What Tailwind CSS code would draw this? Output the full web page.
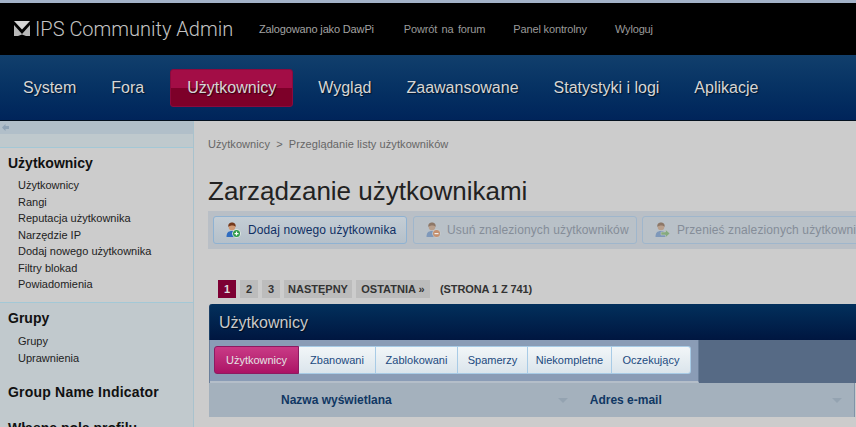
<!DOCTYPE html>
<html lang="pl">
<head>
<meta charset="utf-8">
<script src="https://cdn.jsdelivr.net/npm/@tailwindcss/browser@4"></script>
</head>
<body class="w-[856px] h-[427px] overflow-hidden bg-[#cccccc] font-['Liberation_Sans',Arial,sans-serif]">
<div class="h-[3px] bg-[#a3b2c8]"></div>
<header class="h-[52px] bg-black flex items-center">
  <svg class="ml-[14px] -mt-[1px] w-[16px] h-[15px]" viewBox="0 0 16 15"><path d="M0 0h16L8 8.500z" fill="#d4d4d4"/><path d="M0 4L8 13l8-9v11h-4L8 13.500 4 15H0z" fill="#b8b8b8"/></svg>
  <div class="ml-[5px] text-[20px] font-light text-[#c4c4c4] font-['Roboto',sans-serif] w-[199px] whitespace-nowrap">IPS Community Admin</div>
  <nav class="flex text-[11px] tracking-[-0.15px] text-[#9a9a9a] whitespace-nowrap ml-[25px]">
    <span class="text-[#a3a3a3]">Zalogowano jako DawPi</span>
    <span class="ml-[30px] [word-spacing:1.5px]">Powrót na forum</span>
    <span class="ml-[28px]">Panel kontrolny</span>
    <span class="ml-[28px]">Wyloguj</span>
  </nav>
</header>
<nav class="h-[66px] border-b border-[#04111f] bg-linear-to-b from-[#113f6c] to-[#00245a] flex items-center pl-[23px] text-[16px] text-[#d6d6d6] whitespace-nowrap [text-shadow:1px_1px_1px_rgba(0,0,0,0.6)]">
  <span>System</span>
  <span class="ml-[35px]">Fora</span>
  <span class="ml-[26px] w-[123px] h-[38px] rounded-[3px] border border-[#8a0a3e] bg-linear-to-b from-[#a30d46] from-50% to-[#7d0029] to-50% flex items-center justify-center">Użytkownicy</span>
  <span class="ml-[25px]">Wygląd</span>
  <span class="ml-[35px]">Zaawansowane</span>
  <span class="ml-[35px]">Statystyki i logi</span>
  <span class="ml-[35px]">Aplikacje</span>
</nav>
<div class="flex h-[306px]">
  <aside class="w-[194px] shrink-0 border-r border-[#a9c2cd] overflow-hidden">
    <div class="h-[13px] bg-[#b1bfc9] pl-[2px] flex items-center">
      <svg class="w-[7px] h-[7px]" viewBox="0 0 7 7"><path d="M0 3.500L3.500 0v2H7v3H3.500v2z" fill="#8fa3b5"/></svg>
    </div>
    <div class="h-[14px] bg-[#bfc9cd] border-b border-[#a3c8d6]"></div>
    <section class="h-[155px] border-b border-[#a3c8d6] pl-[8px] pt-[7px]">
      <h3 class="text-[14px] leading-[16px] font-bold text-[#111]">Użytkownicy</h3>
      <ul class="mt-[6px] pl-[10px] text-[11px] leading-[16.5px] text-[#222]">
        <li>Użytkownicy</li><li>Rangi</li><li>Reputacja użytkownika</li><li>Narzędzie IP</li><li>Dodaj nowego użytkownika</li><li>Filtry blokad</li><li>Powiadomienia</li>
      </ul>
    </section>
    <section class="h-[140px] bg-[#c1c9cd] pl-[8px] pt-[7px]">
      <h3 class="text-[14px] leading-[16px] font-bold text-[#111]">Grupy</h3>
      <ul class="mt-[7px] pl-[10px] text-[11px] leading-[16.5px] text-[#222]">
        <li>Grupy</li><li>Uprawnienia</li>
      </ul>
      <h3 class="mt-[18px] text-[14px] leading-[16px] font-bold text-[#111] tracking-[0.2px]">Group Name Indicator</h3>
      <h3 class="mt-[20px] text-[14px] leading-[16px] font-bold text-[#111]">Własne pola profilu</h3>
    </section>
  </aside>
  <main class="flex-1 min-w-0 overflow-hidden pl-[14px] pt-[17px]">
    <p class="text-[11px] leading-[12px] tracking-[0.08px] text-[#666] whitespace-nowrap">Użytkownicy <span class="mx-[3px]">&gt;</span> Przeglądanie listy użytkowników</p>
    <h1 class="mt-[26px] text-[26px] leading-[30px] text-[#222] whitespace-nowrap">Zarządzanie użytkownikami</h1>
    <div class="mt-[5px] h-[38px] w-[700px] bg-[#b9bfc6] flex items-center pl-[5px] text-[12px] tracking-[0.12px] whitespace-nowrap">
      <span class="w-[194px] shrink-0 h-[28px] pl-[11px] flex items-center gap-[7px] rounded-[3px] border border-[#8fb2d2] bg-linear-to-b from-[#c4cdd5] to-[#b5c0ca] text-[#0f2f63]">
        <svg class="w-[16px] h-[16px]" viewBox="0 0 16 16"><path d="M1.500 15c0-4 1.500-6 5.500-6s5.500 2 5.500 6z" fill="#2f6cc0"/><circle cx="7" cy="5" r="3.300" fill="#d09a75"/><path d="M3.300 5C3 1.500 5 .5 7 .5s4 1 3.700 4.500C9.500 3 5 3 3.300 5z" fill="#74391c"/><circle cx="11.500" cy="11.500" r="4.300" fill="#e4eee4"/><circle cx="11.500" cy="11.500" r="3.500" fill="#2f9a48"/><path d="M9.500 11h4v1.200h-4zM10.900 9.500h1.200v4h-1.200z" fill="#fff"/></svg>
        Dodaj nowego użytkownika
      </span>
      <span class="ml-[6px] w-[224px] shrink-0 h-[28px] pl-[11px] flex items-center gap-[6px] rounded-[3px] border border-[#9fb6cc] bg-[#b9c1c8] text-[#858d98]">
        <svg class="w-[16px] h-[16px]" viewBox="0 0 16 16"><path d="M1.500 15c0-4 1.500-6 5.500-6s5.500 2 5.500 6z" fill="#7e98ba"/><circle cx="7" cy="5" r="3.300" fill="#b89f8c"/><path d="M3.300 5C3 1.500 5 .5 7 .5s4 1 3.700 4.500C9.500 3 5 3 3.300 5z" fill="#8d7767"/><circle cx="11.500" cy="11.500" r="4.200" fill="#c8ccce"/><circle cx="11.500" cy="11.500" r="3.500" fill="#c4906f"/><path d="M9.500 11h4v1.200h-4z" fill="#eee"/></svg>
        Usuń znalezionych użytkowników
      </span>
      <span class="ml-[5px] shrink-0 h-[28px] pl-[11px] pr-[11px] flex items-center gap-[7px] rounded-[3px] border border-[#9fb6cc] bg-[#b9c1c8] text-[#858d98]">
        <svg class="w-[16px] h-[16px]" viewBox="0 0 16 16"><path d="M1.500 15c0-4 1.500-6 5.500-6s5.500 2 5.500 6z" fill="#7e98ba"/><circle cx="7" cy="5" r="3.300" fill="#b89f8c"/><path d="M3.300 5C3 1.500 5 .5 7 .5s4 1 3.700 4.500C9.500 3 5 3 3.300 5z" fill="#8d7767"/><path d="M7 10h4.500V7.500L16 11.500l-4.500 4V13H7z" fill="#85aa7e" stroke="#c8ccce" stroke-width=".5"/></svg>
        Przenieś znalezionych użytkowników
      </span>
    </div>
    <div class="mt-[31px] ml-[10px] flex items-center gap-[4px] h-[18px] text-[11px] font-bold text-[#333] whitespace-nowrap">
      <span class="w-[18px] h-[18px] bg-[#7d0033] text-[#ddd] flex items-center justify-center">1</span>
      <span class="w-[18px] h-[18px] bg-[#bcbcbc] flex items-center justify-center">2</span>
      <span class="w-[18px] h-[18px] bg-[#bcbcbc] flex items-center justify-center">3</span>
      <span class="w-[68px] h-[18px] bg-[#bcbcbc] flex items-center justify-center">NASTĘPNY</span>
      <span class="w-[74px] h-[18px] bg-[#bcbcbc] flex items-center justify-center">OSTATNIA »</span>
      <span class="ml-[6px] tracking-[-0.1px]">(STRONA 1 Z 741)</span>
    </div>
    <section class="mt-[6px] ml-[1px] w-[647px]">
      <div class="h-[36px] pt-[1px] rounded-tl-[3px] border-l border-[#1c3f66] bg-linear-to-b from-[#03305c] to-[#001640] pl-[9px] flex items-center text-[16px] text-[#c9c9c9] [text-shadow:1px_1px_1px_rgba(0,0,0,0.6)]">Użytkownicy</div>
      <div class="h-[43px] border-l border-[#6b7f9a] bg-[#566a85]">
        <div class="h-[43px] w-[489px] pl-[4px] pt-[6px] bg-[#8a9cb6] border-r border-b-2 border-r-[#6b7f9a] border-b-[#b4bec9] flex items-start text-[11px] text-[#1c4a80] whitespace-nowrap">
          <span class="h-[28px] w-[85px] rounded-l-[3px] border border-[#8d1a62] bg-linear-to-b from-[#c93a86] to-[#ac1166] text-[#e4e4e4] flex items-center justify-center">Użytkownicy</span>
          <span class="h-[28px] w-[77px] border border-l-0 border-[#a8cbe6] bg-linear-to-b from-[#f2f6f8] to-[#dbe5ec] flex items-center justify-center">Zbanowani</span>
          <span class="h-[28px] w-[82px] border border-l-0 border-[#a8cbe6] bg-linear-to-b from-[#f2f6f8] to-[#dbe5ec] flex items-center justify-center">Zablokowani</span>
          <span class="h-[28px] w-[70px] border border-l-0 border-[#a8cbe6] bg-linear-to-b from-[#f2f6f8] to-[#dbe5ec] flex items-center justify-center">Spamerzy</span>
          <span class="h-[28px] w-[84px] border border-l-0 border-[#a8cbe6] bg-linear-to-b from-[#f2f6f8] to-[#dbe5ec] flex items-center justify-center">Niekompletne</span>
          <span class="h-[28px] w-[79px] rounded-r-[3px] border border-l-0 border-[#a8cbe6] bg-linear-to-b from-[#f2f6f8] to-[#dbe5ec] flex items-center justify-center">Oczekujący</span>
        </div>
      </div>
      <div class="h-[34px] mr-[1px] bg-[#a4b1bd] border-r border-[#7f93a8] flex items-center text-[12px] font-bold text-[#103763] whitespace-nowrap">
        <span class="ml-[72px]">Nazwa wyświetlana</span>
        <svg class="ml-[166px] w-[10px] h-[5px]" viewBox="0 0 10 5"><path d="M0 0h10L5 5z" fill="#94a3b1"/></svg>
        <span class="ml-[22px]">Adres e-mail</span>
        <svg class="ml-[170px] w-[10px] h-[5px]" viewBox="0 0 10 5"><path d="M0 0h10L5 5z" fill="#94a3b1"/></svg>
      </div>
    </section>
  </main>
</div>
</body>
</html>
